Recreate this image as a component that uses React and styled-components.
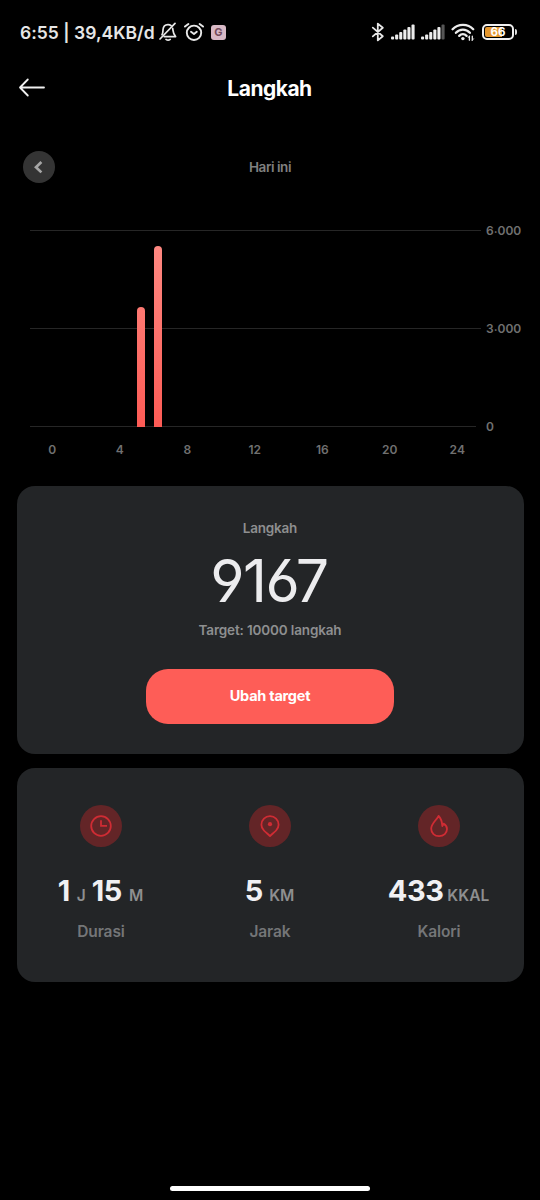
import React from 'react'
import styled, { createGlobalStyle } from 'styled-components'

const hours = [0, 4, 8, 12, 16, 20, 24]
const bars = [
    { x: 107, top: 77 },
    { x: 124, top: 16 },
]

const BellOffIcon = () => (
    <svg width="18" height="20" viewBox="0 0 18 20" fill="none" stroke="#e8e8e8" strokeWidth="1.7" strokeLinecap="round" strokeLinejoin="round">
        <path d="M3 12.7C4 11.3 3.9 10 4 7.8C4.2 4.8 6.2 2.6 9 2.6C10.3 2.6 11.3 3 12.1 3.7" />
        <path d="M13.7 6.4C14.2 9.2 13.8 11.8 16.6 14.6H5.2" />
        <path d="M16 1.4L1 17" />
        <path d="M7 17.4C8.2 18.3 10 18.3 11.2 17.4" />
    </svg>
)

const AlarmIcon = () => (
    <svg width="20" height="20" viewBox="0 0 20 20" fill="none" stroke="#e8e8e8" strokeWidth="1.9" strokeLinecap="round" strokeLinejoin="round">
        <circle cx="10" cy="10.8" r="7.2" />
        <path d="M7 9.8L10 12L12.8 9.8" />
        <path d="M1 4.6L4.4 2M19 4.6L15.6 2" />
    </svg>
)

const BluetoothIcon = () => (
    <svg width="14" height="20" viewBox="0 0 14 20" fill="none" stroke="#e8e8e8" strokeWidth="1.8" strokeLinejoin="round" strokeLinecap="round">
        <path d="M1.8 5.6L11.8 14.2L6.8 18.4V1.6L11.8 5.8L1.8 14.4" />
    </svg>
)

const SignalIcon = ({ weak }) => (
    <svg width="24" height="16" viewBox="0 0 24 16">
        {[3, 5, 7.5, 10, 12.5, 15].map((h, i) => (
            <rect key={h} x={i * 4.1} y={15.5 - h} width="3.1" height={h} rx="1" fill={weak && i === 5 ? '#565656' : '#ececec'} />
        ))}
    </svg>
)

const WifiIcon = () => (
    <svg width="24" height="20" viewBox="0 0 24 20" fill="none" stroke="#ececec" strokeWidth="2.3" strokeLinecap="round">
        <path d="M1.6 7.2C7 1.4 17 1.4 22.2 7.2" />
        <path d="M4.9 10.8C8.8 6.6 15 6.6 18.9 10.8" />
        <path d="M8.2 13.9C10.4 11.7 13.4 11.7 15.6 13.9" />
        <circle cx="11.9" cy="16.6" r="1.7" fill="#ececec" stroke="none" />
        <path d="M18.4 14.2V18.2M21.3 14.2V18.2" strokeWidth="1.3" />
        <path d="M17.2 15.6L18.4 14.2M22.5 16.8L21.3 18.2" strokeWidth="1" />
    </svg>
)

const BackIcon = () => (
    <svg width="28" height="20" viewBox="0 0 28 20" fill="none" stroke="#f0f0f0" strokeWidth="1.8" strokeLinecap="round" strokeLinejoin="round">
        <path d="M26 9.5H2M9.8 1.5L2 9.5L9.8 17.5" />
    </svg>
)

const ChevronIcon = () => (
    <svg width="12" height="14" viewBox="0 0 12 14" fill="none" stroke="#a6a6a6" strokeWidth="2.7">
        <path d="M8.4 2L3 7.2L8.4 12.4" />
    </svg>
)

const ClockIcon = () => (
    <svg width="24" height="24" viewBox="0 0 24 24" fill="none" stroke="#cf2c34" strokeWidth="1.8">
        <circle cx="12" cy="12" r="9.8" />
        <path d="M12 6.2V11.8H18" />
    </svg>
)

const PinIcon = () => (
    <svg width="24" height="24" viewBox="0 0 24 24" fill="none" stroke="#cf2c34" strokeWidth="1.8" strokeLinejoin="round">
        <path d="M12 22.1C10.2 20.2 7.8 18.6 5.9 16.5C4.4 14.8 3.4 13 3.4 10.7A8.6 8.6 0 0 1 20.6 10.7C20.6 13 19.6 14.8 18.1 16.5C16.2 18.6 13.8 20.2 12 22.1Z" />
        <circle cx="12" cy="10.2" r="2.1" fill="#cf2c34" stroke="none" />
    </svg>
)

const FlameIcon = () => (
    <svg width="24" height="24" viewBox="0 0 24 24" fill="none" stroke="#cf2c34" strokeWidth="1.8" strokeLinejoin="round">
        <path d="M11.6 2C8.9 6.8 4.2 9.6 4.2 14.8C4.2 19.1 7.6 22.2 12.1 22.2C16.7 22.2 20 19.1 20 15.1C20 12.6 18.8 10.8 16.6 9.6L15.3 12C15.1 8.6 14.2 4.6 11.6 2Z" />
    </svg>
)

const Battery = () => (
    <BatteryWrapper>
        <BatteryBody><BatteryText>66</BatteryText></BatteryBody>
        <BatteryTip />
    </BatteryWrapper>
)

const Stat = ({ icon, values, label }) => (
    <StatColumn>
        <IconCircle>{icon}</IconCircle>
        <StatValue>
            {values.map(({ num, unit, gap, after }) => (
                <ValuePart key={unit} $after={after}>
                    <Num>{num}</Num>
                    <Unit $gap={gap}>{unit}</Unit>
                </ValuePart>
            ))}
        </StatValue>
        <StatLabel>{label}</StatLabel>
    </StatColumn>
)

const App = () => (
    <Screen>
        <GlobalStyle />
        <StatusBar>
            <StatusText>6:55 | 39,4KB/d</StatusText>
            <StatusIcons $gap="7px">
                <BellOffIcon />
                <AlarmIcon />
                <GBadge>G</GBadge>
            </StatusIcons>
            <StatusIcons $gap="6px" $right>
                <BluetoothIcon />
                <SignalIcon />
                <SignalIcon weak />
                <WifiIcon />
                <Battery />
            </StatusIcons>
        </StatusBar>

        <Header>
            <BackIcon />
            <Title>Langkah</Title>
        </Header>

        <DayRow>
            <PrevButton><ChevronIcon /></PrevButton>
            <DayText>Hari ini</DayText>
        </DayRow>

        <ChartRow>
            <svg width="452" height="200" viewBox="0 0 452 200">
                <defs>
                    <linearGradient id="bar" gradientUnits="userSpaceOnUse" x1="0" y1="0" x2="0" y2="197">
                        <stop offset="0" stopColor="#fe8c85" />
                        <stop offset="1" stopColor="#fd5b55" />
                    </linearGradient>
                </defs>
                <path d="M0 .5H451M0 98.5H451M0 196.5H446" stroke="#262626" />
                {bars.map(({ x, top }) => (
                    <path key={x} d={`M${x} 197V${top + 4}a4 4 0 0 1 8 0V197Z`} fill="url(#bar)" />
                ))}
            </svg>
            <YLabels>
                <span>6<Dot>.</Dot>000</span>
                <span>3<Dot>.</Dot>000</span>
                <span>0</span>
            </YLabels>
        </ChartRow>
        <XLabels>
            {hours.map(h => <span key={h}>{h}</span>)}
        </XLabels>

        <StepsCard>
            <Caption $space="-0.2px">Langkah</Caption>
            <Steps>9167</Steps>
            <Caption $space="-0.15px">Target: 10000 langkah</Caption>
            <TargetButton>Ubah target</TargetButton>
        </StepsCard>

        <StatsCard>
            <Stat icon={<ClockIcon />} label="Durasi" values={[
                { num: 1, unit: 'J', gap: 7, after: 6 },
                { num: 15, unit: 'M', gap: 7 },
            ]} />
            <Stat icon={<PinIcon />} label="Jarak" values={[{ num: 5, unit: 'KM', gap: 6.5 }]} />
            <Stat icon={<FlameIcon />} label="Kalori" values={[{ num: 433, unit: 'KKAL', gap: 4 }]} />
        </StatsCard>

        <HomeBar />
    </Screen>
)
export default App

const GlobalStyle = createGlobalStyle`
    * {
        box-sizing: border-box;
    }
    body {
        margin: 0;
        background: #000;
        font-family: Inter, sans-serif;
    }
    svg {
        display: block;
        flex: none;
    }
    button {
        border: 0;
        padding: 0;
        font-family: inherit;
    }
`

const Screen = styled.div`
    width: 540px;
    height: 1200px;
    background: #000;
    display: flex;
    flex-direction: column;
    overflow: hidden;
`

const StatusBar = styled.div`
    height: 64px;
    padding: 0 23px 0 20px;
    display: flex;
    align-items: center;
`

const StatusText = styled.span`
    width: 138.5px;
    color: #e6e6e6;
    font-size: 17.5px;
    font-weight: 600;
    letter-spacing: 0.02px;
    white-space: nowrap;
`

const StatusIcons = styled.div`
    display: flex;
    align-items: center;
    gap: ${({ $gap }) => $gap};
    margin-left: ${({ $right }) => ($right ? 'auto' : 0)};
`

const GBadge = styled.span`
    width: 15px;
    height: 15px;
    margin-left: 0.5px;
    border-radius: 3px;
    background: #d8b9c6;
    color: #744c5c;
    font-size: 11px;
    font-weight: 700;
    line-height: 15px;
    text-align: center;
`

const BatteryWrapper = styled.div`
    display: flex;
    align-items: center;
    gap: 1px;
    margin-left: 1px;
`

const BatteryBody = styled.div`
    width: 32px;
    height: 16px;
    border: 2px solid #f0f0f0;
    border-radius: 5px;
    padding: 1px;
    background: linear-gradient(90deg, #e5972d 66%, #000 66%) content-box;
    display: flex;
    align-items: center;
    justify-content: center;
`

const BatteryText = styled.span`
    color: #fff;
    font-size: 11.5px;
    font-weight: 700;
    line-height: 12px;
`

const BatteryTip = styled.div`
    width: 2px;
    height: 6px;
    border-radius: 0 2px 2px 0;
    background: #ddd;
`

const Header = styled.header`
    height: 48px;
    padding: 0 17.5px;
    display: grid;
    grid-template-columns: 28px 1fr 28px;
    align-items: center;
`

const Title = styled.h1`
    margin: 1px 1px 0 0;
    color: #fff;
    font-size: 21px;
    font-weight: 650;
    text-align: center;
    letter-spacing: -0.5px;
`

const DayRow = styled.div`
    height: 32px;
    margin: 39px 23px 0;
    display: grid;
    grid-template-columns: 32px 1fr 32px;
    align-items: center;
`

const PrevButton = styled.button`
    width: 32px;
    height: 32px;
    border-radius: 50%;
    background: #343434;
    display: flex;
    align-items: center;
    justify-content: center;
`

const DayText = styled.span`
    color: #808080;
    font-size: 13.5px;
    font-weight: 600;
    text-align: center;
    letter-spacing: -0.45px;
`

const ChartRow = styled.div`
    height: 200px;
    margin-top: 47px;
    padding-left: 30px;
    display: flex;
`

const YLabels = styled.div`
    height: 213px;
    margin: -8px 0 0 4px;
    display: flex;
    flex-direction: column;
    justify-content: space-between;
    color: #707070;
    font-size: 12px;
    font-weight: 600;
    line-height: 17px;
`

const Dot = styled.span`
    vertical-align: 2px;
    line-height: 1;
`

const XLabels = styled.div`
    height: 20px;
    margin: 10px 48px 0 18.5px;
    display: grid;
    grid-template-columns: repeat(7, 67.5px);
    line-height: 20px;
    text-align: center;
    color: #707070;
    font-size: 12px;
    font-weight: 600;
`

const Card = styled.section`
    margin: 0 16.5px;
    border-radius: 18px;
    background: #232527;
    display: flex;
`

const StepsCard = styled(Card)`
    height: 268px;
    margin-top: 26.4px;
    padding-top: 31.6px;
    flex-direction: column;
    align-items: center;
`

const Caption = styled.p`
    margin: 0;
    color: #8e8f90;
    font-size: 13.5px;
    font-weight: 600;
    line-height: 20px;
    letter-spacing: ${({ $space }) => $space};
`

const Steps = styled.div`
    height: 82px;
    margin-right: 2px;
    line-height: 85px;
    color: #ececee;
    font-size: 59px;
    font-weight: 400;
    letter-spacing: -1.6px;
    font-feature-settings: "cv03", "cv04", "ss01";
`

const TargetButton = styled.button`
    width: 248px;
    height: 55px;
    margin-top: 29px;
    padding-bottom: 1px;
    border-radius: 22px;
    background: #fe5d57;
    color: #fff;
    font-size: 14.5px;
    font-weight: 700;
    letter-spacing: -0.25px;
`

const StatsCard = styled(Card)`
    height: 214px;
    margin-top: 14px;
    padding-top: 37px;
`

const StatColumn = styled.div`
    flex: 1;
    display: flex;
    flex-direction: column;
    align-items: center;
`

const IconCircle = styled.div`
    width: 42px;
    height: 42px;
    border-radius: 50%;
    background: #632527;
    display: flex;
    align-items: center;
    justify-content: center;
`

const StatValue = styled.div`
    height: 40px;
    margin-top: 24px;
    padding-right: 1px;
    line-height: 40px;
    display: flex;
    align-items: baseline;
`

const ValuePart = styled.span`
    margin-right: ${({ $after = 0 }) => $after}px;
`

const Num = styled.span`
    color: #f0f0f3;
    font-size: 29px;
    font-weight: 650;
    letter-spacing: -0.5px;
`

const Unit = styled.span`
    margin-left: ${({ $gap }) => $gap}px;
    color: #8e8f90;
    font-size: 15.5px;
    font-weight: 600;
`

const StatLabel = styled.span`
    margin-top: 10px;
    color: #747678;
    font-size: 15.5px;
    font-weight: 600;
    line-height: 22px;
    letter-spacing: -0.1px;
`

const HomeBar = styled.div`
    width: 200px;
    height: 5px;
    margin: auto auto 9px;
    border-radius: 3px;
    background: #fff;
`
